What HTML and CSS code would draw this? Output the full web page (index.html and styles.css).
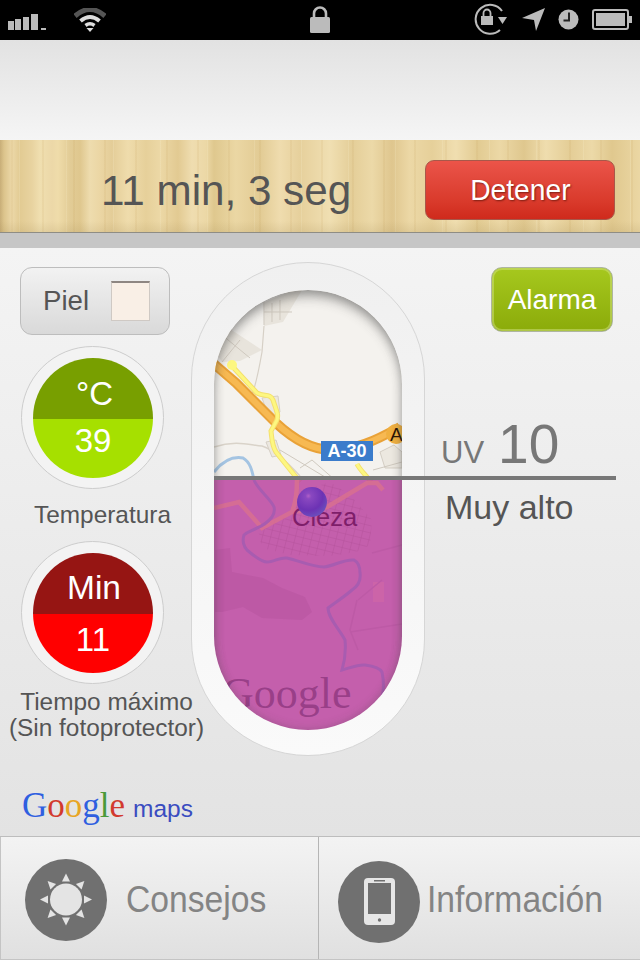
FILE: index.html
```html
<!DOCTYPE html>
<html lang="es">
<head>
<meta charset="utf-8">
<title>UV</title>
<link rel="stylesheet" href="styles.css">
</head>
<body>
<div class="app">
  <header class="status">
    <div class="status-left">
      <svg class="ic-signal" width="38" height="16" viewBox="0 0 38 16"><rect x="0" y="7" width="6" height="9"/><rect x="7" y="5" width="6" height="11"/><rect x="15" y="3" width="6" height="13"/><rect x="23" y="0" width="7" height="16"/><rect x="33" y="14" width="5" height="2"/></svg>
      <svg class="ic-wifi" width="32" height="24" viewBox="0 0 32 24"><path d="M1 8 Q16 -5 31 8" fill="none" stroke="#555" stroke-width="5"/><path d="M6.500 13 Q16 5 25.500 13" fill="none" stroke="#ddd" stroke-width="4"/><path d="M11.500 17.500 Q16 14 20.500 17.500" fill="none" stroke="#ddd" stroke-width="3.500"/><path d="M12.500 20 L16 24 L19.500 20 Z" fill="#ddd"/></svg>
    </div>
    <svg class="ic-lock" width="20" height="27" viewBox="0 0 20 27"><path d="M4 12V7.500a6 6 0 0 1 12 0V12" fill="none" stroke="#bbb" stroke-width="2.600"/><rect y="11" width="20" height="16" rx="1.500" fill="#bbb"/></svg>
    <div class="status-right">
      <svg width="37" height="32" viewBox="0 0 37 32"><path d="M30 8A14.500 14.500 0 1 0 28 27" fill="none" stroke="#bbb" stroke-width="2"/><rect x="9" y="13" width="12" height="9" fill="#bbb"/><path d="M11.500 13V10a3.500 3.500 0 0 1 7 0V13" fill="none" stroke="#bbb" stroke-width="1.800"/><path d="M26 14H35L30.500 21Z" fill="#bbb"/></svg>
      <svg width="23" height="23" viewBox="0 0 23 23"><path d="M23 0L14 23L12 12L0 10Z" fill="#bbb"/></svg>
      <svg width="21" height="21" viewBox="0 0 21 21"><circle cx="10.500" cy="10.500" r="10" fill="#bbb"/><path d="M11 3.500V11.500H5.500" fill="none" stroke="#222" stroke-width="2"/></svg>
      <svg width="40" height="21" viewBox="0 0 40 21"><rect x="1" y="1" width="35" height="19" rx="2" fill="none" stroke="#bbb" stroke-width="2"/><rect x="4" y="4" width="29" height="13" fill="#bbb"/><rect x="37" y="7" width="3" height="7" fill="#bbb"/></svg>
    </div>
  </header>

  <div class="topbar"></div>

  <section class="wood">
    <div class="time">11 min, 3 seg</div>
    <button class="btn-stop"><span>Detener</span></button>
  </section>
  <div class="strip"></div>

  <main class="main">
    <div class="col-left">
      <button class="btn-skin"><span>Piel</span><i class="swatch"></i></button>
      <div class="gauge gauge-first">
        <div class="gauge-in">
          <div class="half top top-c green-d">°C</div>
          <div class="half bot-c green-l">39</div>
        </div>
      </div>
      <p class="cap cap-temp">Temperatura</p>
      <div class="gauge">
        <div class="gauge-in">
          <div class="half top top-m red-d">Min</div>
          <div class="half bot-m red-l">11</div>
        </div>
      </div>
      <p class="cap cap-time">Tiempo máximo<br>(Sin fotoprotector)</p>
      <div class="glogo"><span class="gword"><b class="c-b">G</b><b class="c-r">o</b><b class="c-y">o</b><b class="c-b">g</b><b class="c-g">l</b><b class="c-r">e</b></span><span class="gmaps">maps</span></div>
    </div>

    <div class="pill">
      <div class="pill-in">
        <svg class="map" width="188" height="440" viewBox="214 290 188 440">
          <defs>
            <pattern id="grid" width="8" height="7" patternUnits="userSpaceOnUse" patternTransform="rotate(14)"><path d="M0 0H8M0 0V7" fill="none" stroke="#ad4c94" stroke-width=".7"/></pattern>
            <radialGradient id="pin" cx=".38" cy=".3" r=".8"><stop offset="0" stop-color="#b060c8"/><stop offset=".12" stop-color="#8a48c0"/><stop offset=".6" stop-color="#6c32b4"/><stop offset="1" stop-color="#6a58c0"/></radialGradient>
            <clipPath id="below"><rect x="214" y="480" width="188" height="250"/></clipPath>
          </defs>
          <rect x="214" y="290" width="188" height="440" fill="#f4f2ee"/>
          <path d="M265 302L293 290H302L283 322L264 326Z" fill="#e8e4dc"/>
          <path d="M214 350L230 329L262 350L240 361L222 362Z" fill="#e8e4dc"/>
          <path d="M264 302V325M272 303V322M280 300V320M264 312H292M222 335L250 358M232 329L214 350M240 340L222 362" fill="none" stroke="#cfc9bf"/>
          <path d="M262 352C258 375 256 385 251 398M264 326L262 352" fill="none" stroke="#d6d0c6" stroke-width="1.200"/>
          <path d="M214 447C235 440 250 445 262 446C275 450 290 465 300 476" fill="none" stroke="#d9d3c9" stroke-width="1.500"/>
          <path d="M262 398L278 396L280 412L270 420ZM266 442L276 440L281 455L272 457Z" fill="#ece8e0" stroke="#d6d0c6"/>
          <path d="M380 452L394 445L402 452V468H385Z" fill="#ece8e0" stroke="#d3cdc3"/>
          <path d="M280 450L330 480M300 468L312 460L335 480M373 470L402 462" fill="none" stroke="#cfc9bf"/>
          <path d="M214 472C222 462 232 456 243 458C250 462 252 470 254 480" fill="none" stroke="#a4c4e2" stroke-width="3"/>
          <path d="M214 364L236 383L276 423C292 438 312 450 332 450C355 450 375 441 400 427" fill="none" stroke="#e9a238" stroke-width="10"/>
          <path d="M214 364L236 383L276 423C292 438 312 450 332 450C355 450 375 441 400 427" fill="none" stroke="#f7b952" stroke-width="6"/>
          <path d="M232 366L257 393C264 397 270 393 273 400C276 410 279 414 277 420L271 431C272 440 272 446 276 452L300 482M357 464C360 470 365 474 371 482" fill="none" stroke="#f4e06c" stroke-width="5"/>
          <path d="M232 366L257 393C264 397 270 393 273 400C276 410 279 414 277 420L271 431C272 440 272 446 276 452L300 482M357 464C360 470 365 474 371 482" fill="none" stroke="#fdf780" stroke-width="3"/>
          <circle cx="232" cy="365" r="5" fill="#fdf780"/>
          <circle cx="396" cy="434" r="10" fill="#f0b040"/>
          <text class="map-a" x="390" y="441">A</text>
          <rect x="321" y="441" width="52" height="20" fill="#3b7ccb"/>
          <text class="map-shield" x="347" y="457">A-30</text>
          <rect x="214" y="480" width="188" height="250" fill="#bb45a0" fill-opacity=".85"/>
          <path d="M215 550L230 548L232 572L263 578L282 588L305 597L312 612L302 620L262 618L243 607L222 612L215 612Z" fill="#ab4c96" fill-opacity=".3"/>
          <rect x="373" y="582" width="11" height="20" fill="#cc64a8"/>
          <path d="M357 600L350 630L358 650M350 632L402 624M358 600L382 580M402 545L372 553" fill="none" stroke="#bd5aa6" stroke-width="1.500"/>
          <path d="M258 530L270 520L292 515L305 490L330 482L350 495L372 520L370 545L356 552L330 556L290 555L262 548Z" fill="url(#grid)"/>
          <path d="M214 508L239 502L262 528L292 512C295 505 297 495 297 480M292 512L327 507L367 483L377 483L383 490" fill="none" stroke="#d8708f" stroke-width="4.500" stroke-opacity=".85"/>
          <path clip-path="url(#below)" d="M254 480C258 490 270 498 274 507C275 511 274 514 272 517C268 522 262 526 257 528C252 531 247 532 244 535C242 541 244 547 247 550C254 556 262 562 267 562C274 562 280 557 287 558C300 561 312 567 324 567C334 566 344 559 354 560C358 562 360 566 360 573C361 580 358 586 352 590C344 597 336 602 328 608C328 618 340 630 345 640C346 650 345 660 342 670C350 668 358 664 365 665C372 666 380 668 382 672C384 682 384 690 382 697" fill="none" stroke="#a85cb0" stroke-width="3"/>
          <text class="map-city" x="292" y="526">Cieza</text>
          <text class="map-google" x="222" y="708">Google</text>
          <circle cx="312" cy="502" r="15" fill="url(#pin)"/>
        </svg>
      </div>
    </div>

    <div class="col-right">
      <button class="btn-alarm">Alarma</button>
      <div class="uv"><span class="uv-k">UV</span><span class="uv-v">10</span></div>
      <div class="uv-t">Muy alto</div>
    </div>
    <div class="uv-line"></div>
  </main>

  <nav class="tabs">
    <a class="tab tab-a">
      <svg width="82" height="82" viewBox="0 0 82 82"><circle cx="41" cy="41" r="41" fill="#707070"/><circle cx="41" cy="40.500" r="16" fill="#e4e4e4"/><g fill="#e4e4e4"><path d="M41 14.500L45 22.500H37Z"/><path d="M41 14.500L45 22.500H37Z" transform="rotate(45 41 40.500)"/><path d="M41 14.500L45 22.500H37Z" transform="rotate(90 41 40.500)"/><path d="M41 14.500L45 22.500H37Z" transform="rotate(135 41 40.500)"/><path d="M41 14.500L45 22.500H37Z" transform="rotate(180 41 40.500)"/><path d="M41 14.500L45 22.500H37Z" transform="rotate(225 41 40.500)"/><path d="M41 14.500L45 22.500H37Z" transform="rotate(270 41 40.500)"/><path d="M41 14.500L45 22.500H37Z" transform="rotate(315 41 40.500)"/></g></svg>
      <span class="tab-label">Consejos</span>
    </a>
    <a class="tab tab-b">
      <svg width="82" height="82" viewBox="0 0 82 82"><circle cx="41" cy="41" r="41" fill="#707070"/><rect x="26" y="17" width="31" height="47" rx="4" fill="#e6e6e6"/><rect x="30" y="22" width="23" height="31" fill="#707070"/><rect x="36" y="19" width="11" height="1.500" fill="#707070"/><circle cx="41.500" cy="59" r="1.700" fill="#707070"/></svg>
      <span class="tab-label">Información</span>
    </a>
  </nav>
</div>
</body>
</html>
```
FILE: styles.css
```css
* { box-sizing: border-box; }
html, body { margin: 0; padding: 0; }
body { width: 640px; height: 960px; overflow: hidden; font-family: "Liberation Sans", Arial, sans-serif; background: #e3e3e3; }
p { margin: 0; }
button { font-family: inherit; padding: 0; cursor: pointer; }
.app { width: 640px; height: 960px; display: flex; flex-direction: column; }

.status { height: 40px; background: #000; display: flex; align-items: center; justify-content: space-between; position: relative; padding: 0 8px; }
.status-left { display: flex; align-items: center; gap: 27px; width: 98px; height: 40px; }
.ic-signal { fill: #bbb; margin-top: 3px; }
.ic-wifi { margin-top: -1px; margin-left: 1px; }
.ic-lock { margin-left: 62px; margin-top: -2px; }
.status-right { display: flex; align-items: center; gap: 13px; height: 40px; }
.status-right svg { margin-top: -2px; }

.topbar { height: 100px; background: linear-gradient(#e2e2e2, #f5f5f5); }

.wood {
  height: 93px; display: flex; align-items: center; position: relative; padding: 5px 25px 0 101px; justify-content: space-between;
  border-bottom: 1px solid #8f8d84;
  background:
    linear-gradient(transparent 88%, rgba(150,125,70,.14)),
    repeating-linear-gradient(90deg, transparent 0 19px, rgba(255,250,225,.14) 19px 20px, transparent 20px 47px),
    repeating-linear-gradient(90deg, transparent 0 11px, rgba(190,150,80,.1) 11px 13px, transparent 13px 31px),
    linear-gradient(90deg, #c8ae78 0, #dcc48c 4px, #ecd8a8 12px, #e2cb93 20px, #e8d3a0 32px, #f0dfb0 40px, #ecd8a8 52px, #efdcaa 58px, #e2cc96 70px, #dfc78e 80px, #eedcae 90px, #ebd6a4 100px, #e4cd98 112px, #efdcac 128px, #e6d09a 146px, #ecd8a6 160px, #e2ca92 178px, #efddb0 192px, #ecd8a6 206px, #dfc88e 214px, #ebd7a4 236px, #e2cb94 260px, #efdcae 280px, #e6d09c 300px, #f0dfb2 330px, #e4ce98 352px, #ecd9a8 372px, #dfc68e 392px, #ecd8a6 410px, #e6d09a 432px, #f0deb0 456px, #e2cb92 478px, #ecd8a6 500px, #dfc78e 524px, #efddae 546px, #e4cd96 570px, #ecd9a8 592px, #e0c88e 612px, #ebd7a4 640px);
}
.time { font-size: 42.200px; color: #555; margin-top: 4px; }
.btn-stop {
  width: 190px; height: 60px; margin-top: 2px; border-radius: 9px; border: 1px solid #a8584a;
  background: linear-gradient(#ec5449 0, #e44b3f 25%, #d93a2b 70%, #cf2a1c 100%);
  color: #fff; font-size: 30px; text-shadow: 1px 1px 2px rgba(60,10,0,.6);
}
.btn-stop span { display: inline-block; transform: scaleX(.94); }
.strip { height: 15px; background: #c6c6c6; }

.main {
  flex: 1; position: relative; display: grid; grid-template-columns: 191px 234px 215px; padding-top: 14px;
  background: linear-gradient(#f4f4f4, #e3e3e3);
}
.col-left { display: flex; flex-direction: column; align-items: flex-start; padding-top: 5px; }
.btn-skin {
  margin-left: 20px; width: 150px; height: 68px; border-radius: 12px; border: 1px solid #bdbdbd;
  background: linear-gradient(#f2f2f2, #d9d9d9); display: flex; align-items: center; padding: 0 19px 0 22px; justify-content: space-between;
  font-size: 27.600px; color: #555;
}
.swatch { display: block; width: 39px; height: 40px; background: #f9efe6; border: 1px solid #cfc9c4; border-top: 2px solid #8e8682; }
.gauge { margin: 12px 0 0 21px; width: 143px; height: 143px; border-radius: 50%; border: 1px solid #cdcdcd; background: #f3f3f3; padding: 11px; flex: none; }
.gauge-first { margin-top: 11px; }
.gauge-in { width: 120px; height: 120px; border-radius: 50%; overflow: hidden; display: flex; flex-direction: column; color: #fff; font-size: 33px; text-align: center; flex: none; }
.half { height: 59px; display: flex; align-items: center; justify-content: center; flex: none; }
.half.top { height: 61px; }
.top-c { padding: 10px 0 0 3px; }
.top-m { padding: 9px 0 0 2px; font-size: 33.500px; }
.bot-c { padding-bottom: 15px; }
.bot-m { padding-bottom: 7px; }
.green-d { background: #789f00; }
.green-l { background: #a6e000; }
.red-d { background: #961513; }
.red-l { background: #ff0000; }
.cap { font-size: 24.400px; color: #555; text-align: center; white-space: nowrap; flex: none; }
.cap-temp { width: 205px; line-height: 28px; margin-top: 12px; }
.cap-time { width: 213px; line-height: 26px; margin-top: 5px; }
.glogo { margin: 47px 0 0 22px; display: flex; align-items: baseline; white-space: nowrap; }
.gword { font-family: "Liberation Serif", serif; font-size: 35px; line-height: 36px; }
.gword b { font-weight: 400; }
.c-b { color: #2f5fe0; }
.c-r { color: #d23a2e; }
.c-y { color: #e8a524; }
.c-g { color: #4b9a3a; }
.gmaps { font-size: 24.500px; color: #3a4cc0; margin-left: 8px; }

.pill { width: 234px; height: 494px; border-radius: 117px; border: 1px solid #d6d6d6; background: linear-gradient(#f0f0f0, #fafafa); padding: 27px 0 0 22px; }
.pill-in { width: 188px; height: 440px; border-radius: 94px; overflow: hidden; position: relative; }
.pill-in::after { content: ""; position: absolute; inset: 0; border-radius: 94px; box-shadow: inset 0 8px 12px -2px rgba(60,60,60,.45), inset 0 0 10px rgba(70,70,70,.25); }
.map { display: block; }
.map-a { font-family: "Liberation Sans", sans-serif; font-size: 19px; fill: #2a1505; }
.map-shield { font-family: "Liberation Sans", sans-serif; font-size: 18px; font-weight: 700; fill: #fff; text-anchor: middle; }
.map-city { font-family: "Liberation Sans", sans-serif; font-size: 25.500px; fill: #7e1e6a; }
.map-google { font-family: "Liberation Serif", serif; font-size: 44px; fill: #7c2a70; fill-opacity: .6; }

.col-right { display: flex; flex-direction: column; padding: 5px 0 0 16px; min-width: 0; }
.btn-alarm {
  align-self: flex-end; margin-right: 27px; width: 122px; height: 65px; border-radius: 11px; border: 1px solid #aeb5a0;
  background: linear-gradient(#a6c81e, #8bab0a); box-shadow: inset 0 0 0 2px rgba(210,225,130,.5);
  color: #fff; font-size: 28px;
}
.uv { display: flex; align-items: baseline; gap: 14px; margin-top: 80px; color: #777; height: 65px; line-height: 65px; }
.uv-k { font-size: 31px; }
.uv-v { font-size: 55px; }
.uv-t { font-size: 34px; line-height: 40px; color: #555; margin: 10px 0 0 4px; }
.uv-line { position: absolute; left: 214px; top: 228px; width: 402px; height: 4px; background: #777; }

.tabs { height: 124px; display: grid; grid-template-columns: 319px 321px; border-top: 1px solid #bdbdbd; border-bottom: 1px solid #c4c4c4; background: linear-gradient(#f3f3f3, #e0e0e0); }
.tab { display: flex; align-items: center; color: #848484; font-size: 36px; white-space: nowrap; min-width: 0; }
.tab-label { display: block; transform: scaleX(.935); transform-origin: left center; margin-top: 3px; }
.tab-a { padding-left: 24px; gap: 19px; border-left: 1px solid #c4c4c4; border-right: 1px solid #b5b5b5; }
.tab-a svg { margin-top: 4px; flex: none; }
.tab-b { padding-left: 19px; gap: 7px; }
.tab-b svg { margin-top: 7px; flex: none; }
```
